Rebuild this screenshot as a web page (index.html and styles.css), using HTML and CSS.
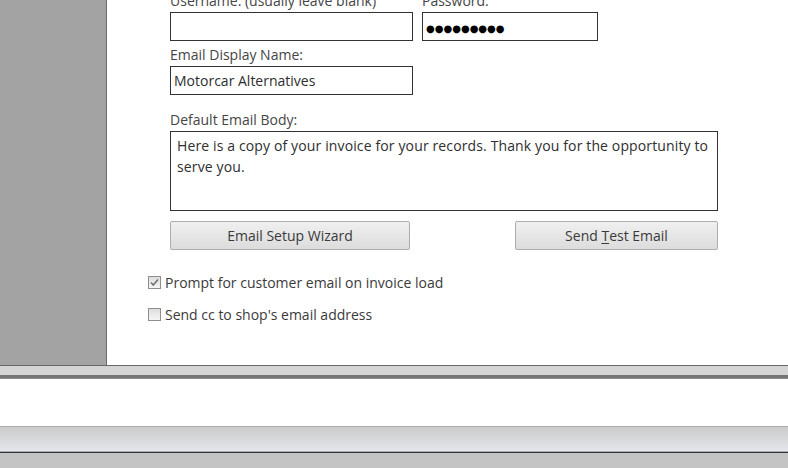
FILE: index.html
```html
<!DOCTYPE html>
<html>
<head>
<meta charset="utf-8">
<link rel="stylesheet" href="styles.css">
</head>
<body>
<div class="main">
  <div class="sidebar"></div>
  <div class="content">
    <div class="form">
      <div class="grid">
        <label class="lbl">Username: (usually leave blank)</label>
        <label class="lbl">Password:</label>
        <div class="field user"></div>
        <div class="field pass"><span class="dots">●●●●●●●●●</span></div>
        <label class="lbl">Email Display Name:</label>
        <span></span>
        <div class="field user">Motorcar Alternatives</div>
      </div>
      <label class="lbl body-lbl">Default Email Body:</label>
      <div class="textarea">Here is a copy of your invoice for your records. Thank you for the opportunity to serve you.</div>
      <div class="btnrow">
        <div class="btn wizard">Email Setup Wizard</div>
        <div class="btn test">Send <u>T</u>est Email</div>
      </div>
      <div class="checks">
        <div class="check">
          <span class="box"><svg width="11" height="11" viewBox="0 0 11 11"><path d="M2 5.5 L4.3 8 L9 2.5" fill="none" stroke="#707070" stroke-width="1.5"/></svg></span>
          <span>Prompt for customer email on invoice load</span>
        </div>
        <div class="check">
          <span class="box"></span>
          <span>Send cc to shop's email address</span>
        </div>
      </div>
    </div>
  </div>
</div>
<div class="splitter"></div>
<div class="lower"></div>
<div class="toolbar"></div>
<div class="statusbar"></div>
</body>
</html>
```
FILE: styles.css
```css
html, body {
  margin: 0;
  padding: 0;
}
body {
  width: 788px;
  height: 468px;
  overflow: hidden;
  font-family: "Open Sans", "Noto Sans", sans-serif;
  font-size: 14px;
  color: #444;
  background: #fff;
}
.main {
  display: flex;
  height: 365px;
  border-bottom: 1px solid #666;
  overflow: hidden;
}
.sidebar {
  width: 106px;
  background: #a3a3a3;
  border-right: 1px solid #6a6a6a;
}
.content {
  flex: 1;
  background: #fff;
  overflow: hidden;
}
.form {
  margin-top: -13px;
  padding-left: 63px;
  width: 548px;
}
.grid {
  display: grid;
  grid-template-columns: 243px 176px;
  column-gap: 9px;
}
.lbl {
  display: block;
  box-sizing: border-box;
  height: 25px;
  padding-top: 4px;
  line-height: 20px;
  color: #454545;
  white-space: nowrap;
}
.field {
  box-sizing: border-box;
  height: 29px;
  border: 1px solid #333;
  padding: 0 3px;
  line-height: 27px;
  color: #2e2e2e;
  white-space: nowrap;
}
.dots {
  font-family: "DejaVu Sans", sans-serif;
  font-size: 10px;
  color: #000;
  letter-spacing: 0;
}
.body-lbl {
  height: 36px;
  padding-top: 15px;
}
.textarea {
  box-sizing: border-box;
  height: 80px;
  border: 1px solid #333;
  padding: 3px 6px;
  line-height: 21px;
  color: #2e2e2e;
  letter-spacing: 0.13px;
}
.btnrow {
  display: flex;
  justify-content: space-between;
  margin-top: 10px;
}
.btn {
  box-sizing: border-box;
  height: 29px;
  border: 1px solid #adadad;
  border-radius: 2px;
  background: linear-gradient(#f0f0f0, #dcdcdc);
  text-align: center;
  line-height: 27px;
  color: #3a3a3a;
}
.btn u {
  text-decoration-thickness: 1px;
  text-underline-offset: 2px;
}
.wizard { width: 240px; }
.test { width: 203px; }
.checks {
  margin-top: 16px;
  margin-left: -22px;
}
.check {
  display: flex;
  align-items: center;
  height: 32px;
  gap: 4px;
  color: #3a3a3a;
  white-space: nowrap;
}
.box {
  box-sizing: border-box;
  width: 13px;
  height: 13px;
  border: 1px solid #8e8e8e;
  background: linear-gradient(#dedede, #f5f5f5);
  display: flex;
  align-items: center;
  justify-content: center;
  flex: none;
}
.box svg { display: block; }
.splitter {
  height: 9px;
  background: #d4d4d4;
  border-bottom: 3px solid #767676;
  box-shadow: 0 1px 0 #8a8a8a;
  margin-bottom: 1px;
}
.lower {
  height: 47px;
  background: #fff;
}
.toolbar {
  height: 24px;
  border-top: 1px solid #aaa;
  border-bottom: 1px solid #a6adb5;
  background: linear-gradient(#cbcbcb, #e4e6ea);
}
.statusbar {
  height: 15px;
  border-top: 1px solid #333;
  background: #c4c4c4;
}
```
